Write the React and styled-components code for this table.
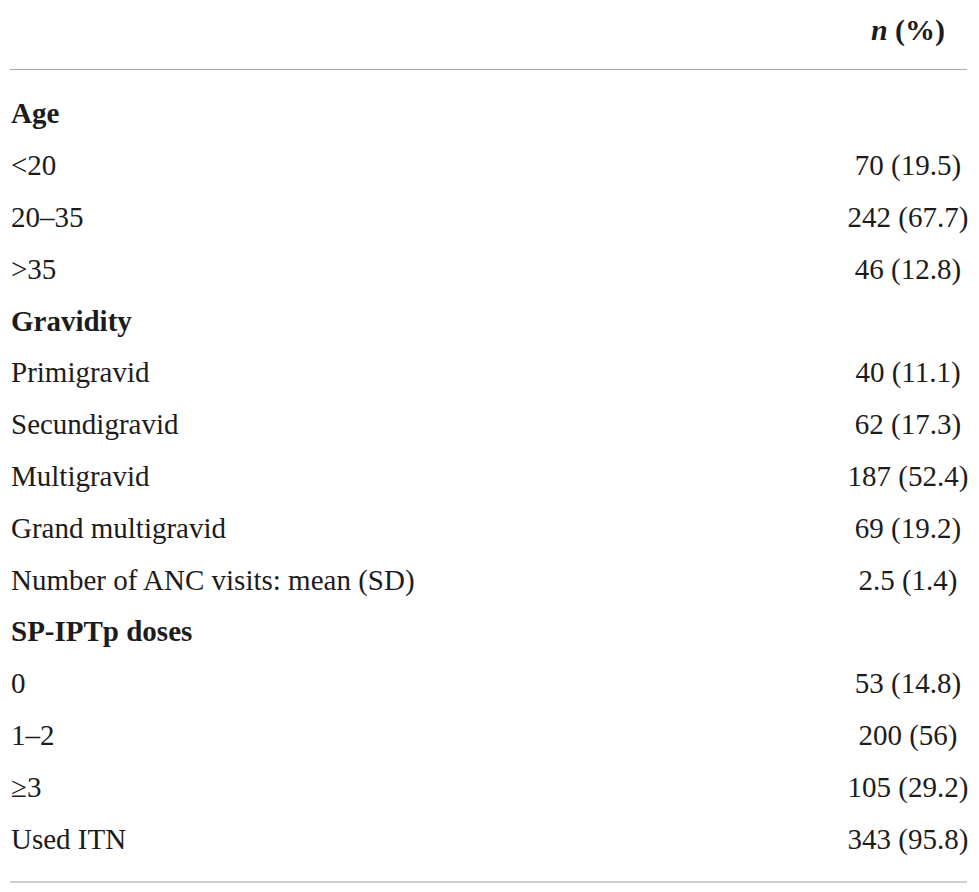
import React from "react";
import styled, { createGlobalStyle } from "styled-components";

const GlobalStyle = createGlobalStyle`
  html, body { margin: 0; padding: 0; background: #ffffff; }
  body { font-family: "Liberation Serif", "Times New Roman", serif; color: #1c1c1c; }
`;

const Table = styled.div`
  width: 957px;
  margin: 0 12px 0 10px;
  display: grid;
  grid-template-columns: 1fr 118px;
  font-size: 29px;
`;

const HeadCell = styled.div`
  padding: 16px 0 25px;
  line-height: 28px;
  font-weight: 700;
  font-size: 30px;
  text-align: ${(p) => (p.$center ? "center" : "left")};
  border-bottom: 1px solid #a8a8a8;
`;

const Body = styled.div`
  grid-column: 1 / -1;
  display: grid;
  grid-template-columns: 1fr 118px;
  padding: 18px 0 16px;
  border-bottom: 2px solid #cfcfcf;
`;

const Cell = styled.div`
  height: 51.8px;
  display: flex;
  align-items: center;
  justify-content: ${(p) => (p.$center ? "center" : "flex-start")};
  padding-left: ${(p) => (p.$center ? "0" : "1px")};
  font-weight: ${(p) => (p.$bold ? 700 : 400)};
  white-space: nowrap;
`;

const rows = [
  { label: "Age", bold: true },
  { label: "<20", value: "70 (19.5)" },
  { label: "20–35", value: "242 (67.7)" },
  { label: ">35", value: "46 (12.8)" },
  { label: "Gravidity", bold: true },
  { label: "Primigravid", value: "40 (11.1)" },
  { label: "Secundigravid", value: "62 (17.3)" },
  { label: "Multigravid", value: "187 (52.4)" },
  { label: "Grand multigravid", value: "69 (19.2)" },
  { label: "Number of ANC visits: mean (SD)", value: "2.5 (1.4)" },
  { label: "SP-IPTp doses", bold: true },
  { label: "0", value: "53 (14.8)" },
  { label: "1–2", value: "200 (56)" },
  { label: "≥3", value: "105 (29.2)" },
  { label: "Used ITN", value: "343 (95.8)" },
];

export default function App() {
  return (
    <>
      <GlobalStyle />
      <Table>
        <HeadCell />
        <HeadCell $center>
          <i>n</i> (%)
        </HeadCell>
        <Body>
          {rows.map((r, i) => (
            <React.Fragment key={i}>
              <Cell $bold={r.bold}>{r.label}</Cell>
              <Cell $center>{r.value || ""}</Cell>
            </React.Fragment>
          ))}
        </Body>
      </Table>
    </>
  );
}
